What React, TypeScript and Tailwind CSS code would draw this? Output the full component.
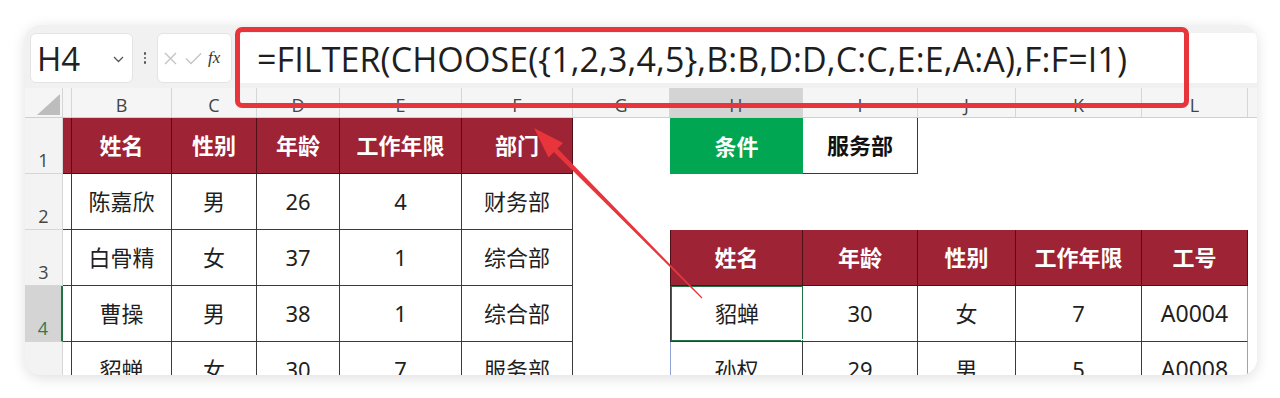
import React from 'react';

const GRID =
  'grid grid-cols-[38px_9px_100px_85px_83px_122px_111px_97px_133px_115px_98px_126px_106px_1fr]';

const CELL =
  'flex items-center justify-center overflow-hidden whitespace-nowrap text-[22px] text-[#1f1f1f]';
const RH =
  'flex items-end justify-center pb-[1px] text-[18px] leading-[24px] text-[#444] bg-[#f3f3f3] border-r border-b border-[#d6d6d6] [font-family:"Open_Sans",sans-serif]';
const RED =
  'bg-[#9d2335] text-white font-bold border-r border-b border-[#4f1018]';
const DATA = 'bg-white border-r border-b border-[#3a3a3a]';
const EMPTY = 'bg-white';

function C({ c = '', t = '' }: { c?: string; t?: string }) {
  return <div className={`${CELL} ${c}`}>{t}</div>;
}

const COLS = ['', 'B', 'C', 'D', 'E', 'F', 'G', 'H', 'I', 'J', 'K', 'L', ''];

export default function App() {
  return (
    <div
      className="relative w-[1280px] h-[398px] bg-white overflow-hidden"
      style={{ fontFamily: '"Noto Sans", "Noto Sans CJK SC", sans-serif' }}
    >
      <div className="absolute left-[25px] top-[25px] w-[1232px] h-[350px] rounded-[16px] overflow-hidden bg-[#f1f1f1] shadow-[0_3px_14px_rgba(0,0,0,0.13)] flex flex-col">
        {/* Formula bar */}
        <div className="h-[63px] flex items-start pt-[8px] pl-[5px] shrink-0">
          <div className="w-[103px] h-[50px] bg-white rounded-[6px] border border-[#e3e3e3] flex items-center justify-between pl-[6px] pr-[8px]">
            <span className="text-[33px] leading-none text-[#222] [font-family:'Open_Sans',sans-serif]">H4</span>
            <svg width="11" height="7" viewBox="0 0 11 7" className="mt-[2px]">
              <path d="M1 1 L5.5 5.5 L10 1" stroke="#555" strokeWidth="1.3" fill="none" />
            </svg>
          </div>
          <div className="w-[24px] h-[50px] flex flex-col items-center justify-center gap-[2px]">
            <span className="w-[2.5px] h-[2.5px] rounded-full bg-[#555]" />
            <span className="w-[2.5px] h-[2.5px] rounded-full bg-[#555]" />
            <span className="w-[2.5px] h-[2.5px] rounded-full bg-[#555]" />
          </div>
          <div className="w-[75px] h-[50px] bg-white rounded-[6px] border border-[#e3e3e3] flex items-center pl-[5px] gap-[7px]">
            <svg width="15" height="15" viewBox="0 0 15 15">
              <path d="M2 2 L13 13 M13 2 L2 13" stroke="#c4c4c4" strokeWidth="1.4" />
            </svg>
            <svg width="17" height="13" viewBox="0 0 17 13">
              <path d="M1 6.5 L6 11.5 L16 1.5" stroke="#c4c4c4" strokeWidth="1.4" fill="none" />
            </svg>
            <span className="text-[17px] italic text-[#333] [font-family:'Liberation_Serif',serif] -ml-[1px]">
              fx
            </span>
          </div>
          <div className="ml-[3px] flex-1 h-[50px] bg-white rounded-l-[4px] flex items-center pl-[22px]">
            <span className="text-[34px] tracking-[0.1px] leading-none text-[#1e1e1e] whitespace-nowrap [font-family:'Open_Sans',sans-serif] mt-[1px]">
              =FILTER(CHOOSE({'{'}1,2,3,4,5{'}'},B:B,D:D,C:C,E:E,A:A),F:F=I1)
            </span>
          </div>
        </div>

        {/* Column headers */}
        <div className={`${GRID} h-[30px] shrink-0 bg-[#f5f5f5] border-b border-[#cfcfcf]`}>
          <div className="relative border-r border-[#d6d6d6]">
            <svg width="24" height="21" viewBox="0 0 24 21" className="absolute left-[12px] top-[6px]">
              <path d="M23 0 L23 21 L0 21 Z" fill="#bdbdbd" />
            </svg>
          </div>
          {COLS.map((l, i) => (
            <div
              key={i}
              className={`flex items-end justify-center text-[18px] leading-[24px] text-[#444] [font-family:'Open_Sans',sans-serif] ${
                i === 12 ? '' : 'border-r border-[#d6d6d6]'
              } ${i === 7 ? 'bg-[#d4d4d4]' : ''}`}
            >
              {l}
            </div>
          ))}
        </div>

        {/* Row 1 */}
        <div className={`${GRID} h-[56px] shrink-0`}>
          <div className={RH}>1</div>
          <C c={RED} />
          <C c={RED} t="姓名" />
          <C c={RED} t="性别" />
          <C c={RED} t="年龄" />
          <C c={RED} t="工作年限" />
          <C c={RED} t="部门" />
          <C c={EMPTY} />
          <C c="bg-[#00a651] text-white font-bold" t="条件" />
          <C c="bg-white font-bold border-r border-b border-[#3a3a3a] text-[#111]" t="服务部" />
          <C c={EMPTY} />
          <C c={EMPTY} />
          <C c={EMPTY} />
          <C c={EMPTY} />
        </div>

        {/* Row 2 */}
        <div className={`${GRID} h-[56px] shrink-0`}>
          <div className={RH}>2</div>
          <C c={DATA} />
          <C c={DATA} t="陈嘉欣" />
          <C c={DATA} t="男" />
          <C c={DATA} t="26" />
          <C c={DATA} t="4" />
          <C c={DATA} t="财务部" />
          <C c={EMPTY} />
          <C c={EMPTY} />
          <C c={EMPTY} />
          <C c={EMPTY} />
          <C c={EMPTY} />
          <C c={EMPTY} />
          <C c={EMPTY} />
        </div>

        {/* Row 3 */}
        <div className={`${GRID} h-[56px] shrink-0`}>
          <div className={RH}>3</div>
          <C c={DATA} />
          <C c={DATA} t="白骨精" />
          <C c={DATA} t="女" />
          <C c={DATA} t="37" />
          <C c={DATA} t="1" />
          <C c={DATA} t="综合部" />
          <C c={EMPTY} />
          <C c={`${RED} border-l`} t="姓名" />
          <C c={RED} t="年龄" />
          <C c={RED} t="性别" />
          <C c={RED} t="工作年限" />
          <C c={RED} t="工号" />
          <C c={EMPTY} />
        </div>

        {/* Row 4 */}
        <div className={`${GRID} h-[56px] shrink-0`}>
          <div className="flex items-end justify-center pb-[1px] text-[18px] leading-[24px] text-[#2f7a4e] bg-[#d4d4d4] border-r-2 border-r-[#217346] border-b border-b-[#d6d6d6] [font-family:'Open_Sans',sans-serif]">
            4
          </div>
          <C c={DATA} />
          <C c={DATA} t="曹操" />
          <C c={DATA} t="男" />
          <C c={DATA} t="38" />
          <C c={DATA} t="1" />
          <C c={DATA} t="综合部" />
          <C c={EMPTY} />
          <div className={`${CELL} relative bg-white border-l border-b border-[#3a3a3a]`}>
            貂蝉
            <div className="absolute inset-[-1px] border-2 border-[#217346]" />
            <div className="absolute right-[-4px] bottom-[-4px] w-[6px] h-[6px] bg-[#217346] border border-white" />
          </div>
          <C c={DATA} t="30" />
          <C c={DATA} t="女" />
          <C c={DATA} t="7" />
          <C c="bg-white border-r border-b border-[#3a3a3a] border-r-[#8fa3d6] text-[23px]" t="A0004" />
          <C c={EMPTY} />
        </div>

        {/* Row 5 */}
        <div className={`${GRID} h-[56px] shrink-0`}>
          <div className={RH}></div>
          <C c={DATA} />
          <C c={DATA} t="貂蝉" />
          <C c={DATA} t="女" />
          <C c={DATA} t="30" />
          <C c={DATA} t="7" />
          <C c={DATA} t="服务部" />
          <C c={EMPTY} />
          <C c="bg-white border-l border-l-[#8fa3d6] border-r border-b border-[#3a3a3a]" t="孙权" />
          <C c={DATA} t="29" />
          <C c={DATA} t="男" />
          <C c={DATA} t="5" />
          <C c="bg-white border-r border-b border-[#3a3a3a] border-r-[#8fa3d6] text-[23px]" t="A0008" />
          <C c={EMPTY} />
        </div>
      </div>

      {/* Red annotation box */}
      <div className="absolute left-[235px] top-[27px] w-[954px] h-[81px] border-[5px] border-[#e8353b] rounded-[7px] pointer-events-none" />

      {/* Red arrow */}
      <svg className="absolute left-0 top-0 pointer-events-none" width="1280" height="398" viewBox="0 0 1280 398">
        <polygon
          points="702.4,297.6 701.6,298.4 553.6,151.7 557.2,148.2"
          fill="#e8353b"
        />
        <polygon points="534,128 563,143 548.5,157.5" fill="#e8353b" />
      </svg>
    </div>
  );
}
